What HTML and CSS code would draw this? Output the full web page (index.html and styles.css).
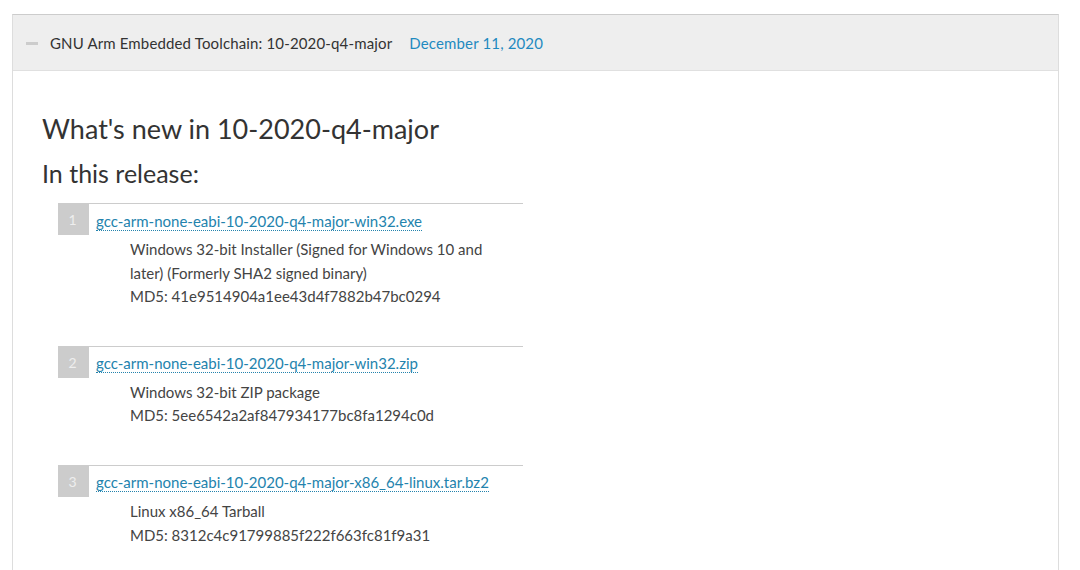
FILE: index.html
```html
<!DOCTYPE html>
<html lang="en">
<head>
  <meta charset="UTF-8" />
  <meta name="viewport" content="width=device-width, initial-scale=1" />
  <title>GNU Arm Embedded Toolchain: 10-2020-q4-major</title>
  <link rel="stylesheet" href="styles.css">
</head>
<body>

  <div class="release">
    <div class="release-head">
      <span class="toggle"></span>
      <span class="release-name">GNU Arm Embedded Toolchain: 10-2020-q4-major</span>
      <span class="release-date">December 11, 2020</span>
    </div>

    <div class="release-body">
      <h2>What's new in 10-2020-q4-major</h2>
      <h3>In this release:</h3>

      <ol class="downloads">
        <li>
          <span class="num">1</span>
          <a href="#">gcc-arm-none-eabi-10-2020-q4-major-win32.exe</a>
          <p class="desc">
            Windows 32-bit Installer (Signed for Windows 10 and later) (Formerly SHA2 signed binary)<br>
            MD5: 41e9514904a1ee43d4f7882b47bc0294
          </p>
        </li>
        <li>
          <span class="num">2</span>
          <a href="#">gcc-arm-none-eabi-10-2020-q4-major-win32.zip</a>
          <p class="desc">
            Windows 32-bit ZIP package<br>
            MD5: 5ee6542a2af847934177bc8fa1294c0d
          </p>
        </li>
        <li>
          <span class="num">3</span>
          <a href="#">gcc-arm-none-eabi-10-2020-q4-major-x86_64-linux.tar.bz2</a>
          <p class="desc">
            Linux x86_64 Tarball<br>
            MD5: 8312c4c91799885f222f663fc81f9a31
          </p>
        </li>
      </ol>
    </div>
  </div>

</body>
</html>
```

FILE: styles.css
```css
* {
  box-sizing: border-box;
}

body {
  margin: 0;
  padding: 14px 21px 0 12px;
  background: #fff;
  font-family: Lato, "Open Sans", sans-serif;
  color: #333;
  height: 570px;
  overflow: hidden;
}

.release {
  border: 1px solid #ddd;
  border-top-color: #ccc;
  height: 600px;
}

/* header bar */
.release-head {
  display: flex;
  align-items: center;
  height: 56px;
  background: #eee;
  border-bottom: 1px solid #e0e0e0;
  padding: 1px 0 0 13px;
  font-size: 15px;
  letter-spacing: 0.15px;
}

.toggle {
  width: 12px;
  height: 3px;
  background: #ccc;
  margin-right: 12px;
}

.release-name {
  color: #333;
  margin-right: 17px;
}

.release-date {
  color: #1f8ac0;
}

/* body */
.release-body {
  padding: 38px 29px 0;
}

h2 {
  margin: 0;
  font-size: 27px;
  font-weight: 400;
  line-height: 40px;
  color: #333;
}

h3 {
  margin: 4px 0 0;
  font-size: 25px;
  font-weight: 400;
  line-height: 40px;
  color: #333;
}

.downloads {
  list-style: none;
  margin: 10px 0 0 16px;
  padding: 0;
  width: 465px;
}

.downloads li {
  display: grid;
  grid-template-columns: 31px 1fr;
  column-gap: 7px;
  border-top: 1px solid #ccc;
  padding-bottom: 37px;
}

.num {
  width: 31px;
  height: 31px;
  background: #ccc;
  color: #eee;
  font-size: 14px;
  display: flex;
  align-items: center;
  justify-content: center;
  padding-right: 2px;
}

.downloads a {
  align-self: center;
  justify-self: start;
  color: #2383ad;
  text-decoration: none;
  border-bottom: 1px dotted #2383ad;
  font-size: 15px;
  line-height: 18px;
  margin-top: 3px;
}

.desc {
  grid-column: 1 / 3;
  margin: 3px 0 0 72px;
  font-size: 15px;
  line-height: 23.6px;
  color: #444;
  max-width: 365px;
}
```
